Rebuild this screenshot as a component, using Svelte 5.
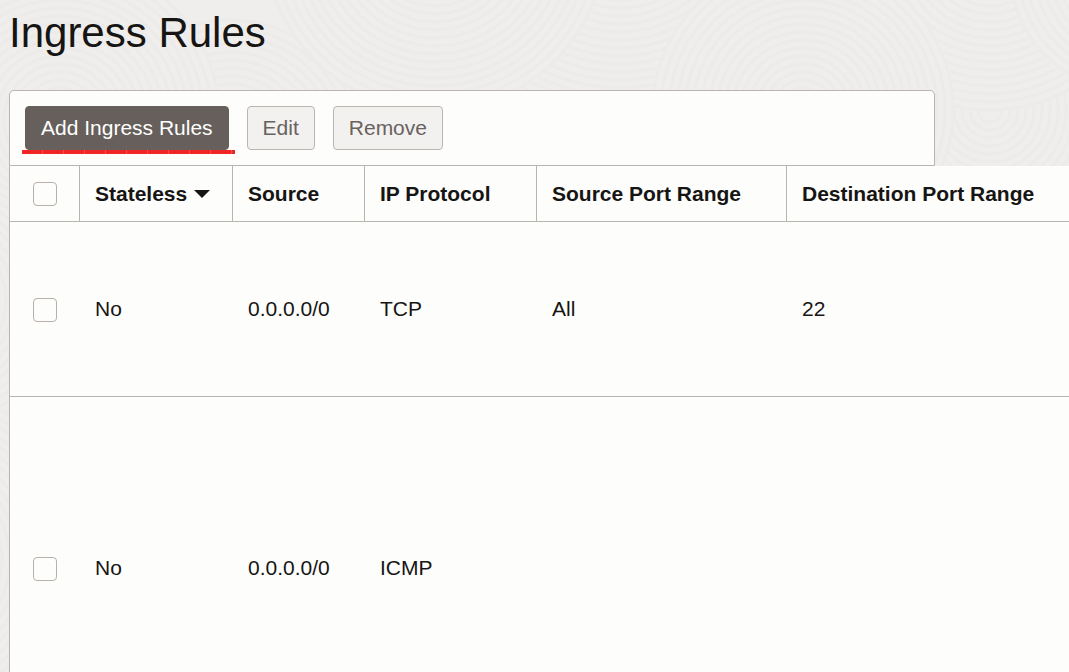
<script lang="ts">
	interface IngressRule {
		id: number;
		stateless: string;
		source: string;
		protocol: string;
		sourcePorts: string;
		destinationPorts: string;
		size: 'medium' | 'large';
	}

	const rules: IngressRule[] = [
		{
			id: 1,
			stateless: 'No',
			source: '0.0.0.0/0',
			protocol: 'TCP',
			sourcePorts: 'All',
			destinationPorts: '22',
			size: 'medium',
		},
		{
			id: 2,
			stateless: 'No',
			source: '0.0.0.0/0',
			protocol: 'ICMP',
			sourcePorts: '',
			destinationPorts: '',
			size: 'large',
		},
	];

	let selected: number[] = $state([]);
	let allSelected = $derived(selected.length === rules.length);

	function toggleAll() {
		selected = allSelected ? [] : rules.map((rule) => rule.id);
	}

	// Overlapping discs of rings, painted back to front
	const swirls = [
		{ cx: 620, cy: -90, r: 250 },
		{ cx: 230, cy: 150, r: 130 },
		{ cx: 60, cy: 120, r: 160 },
		{ cx: 990, cy: 110, r: 100 },
		{ cx: 990, cy: -50, r: 160 },
		{ cx: 1130, cy: -30, r: 120 },
		{ cx: 803, cy: 110, r: 150 },
		{ cx: 435, cy: -60, r: 170 },
		{ cx: -60, cy: 300, r: 130 },
		{ cx: -80, cy: 560, r: 170 },
	];

	function rings(radius: number) {
		const radii: number[] = [];
		for (let r = radius; r > 4; r -= 8) radii.push(r);
		return radii;
	}
</script>

<div class="page">
	<svg class="texture" aria-hidden="true">
		{#each swirls as swirl}
			{#each rings(swirl.r) as r}
				<circle cx={swirl.cx} cy={swirl.cy} {r} />
			{/each}
		{/each}
	</svg>

	<main>
		<h1>Ingress Rules</h1>

		<div class="toolbar">
			<button type="button" class="btn primary">Add Ingress Rules</button>
			<button type="button" class="btn" disabled={selected.length !== 1}>Edit</button>
			<button type="button" class="btn" disabled={selected.length === 0}>Remove</button>
		</div>

		<table>
			<colgroup>
				<col class="col-check" />
				<col class="col-stateless" />
				<col class="col-source" />
				<col class="col-protocol" />
				<col class="col-ports" />
				<col />
			</colgroup>
			<thead>
				<tr>
					<th class="check">
						<input
							type="checkbox"
							aria-label="Select all rules"
							checked={allSelected}
							onchange={toggleAll}
						/>
					</th>
					<th scope="col">
						<button type="button" class="sort">
							Stateless
							<svg width="16" height="8" viewBox="0 0 16 8" aria-hidden="true">
								<path d="M0 0h16L8 8z" />
							</svg>
						</button>
					</th>
					<th scope="col">Source</th>
					<th scope="col">IP Protocol</th>
					<th scope="col">Source Port Range</th>
					<th scope="col">Destination Port Range</th>
				</tr>
			</thead>
			<tbody>
				{#each rules as rule (rule.id)}
					<tr class={rule.size}>
						<td class="check">
							<input
								type="checkbox"
								aria-label="Select {rule.protocol} rule"
								value={rule.id}
								bind:group={selected}
							/>
						</td>
						<td>{rule.stateless}</td>
						<td>{rule.source}</td>
						<td>{rule.protocol}</td>
						<td>{rule.sourcePorts}</td>
						<td>{rule.destinationPorts}</td>
					</tr>
				{/each}
			</tbody>
		</table>
	</main>
</div>

<style>
	:global(body) {
		margin: 0;
		background: #efeeec;
	}

	.page {
		position: relative;
		height: 100vh;
		overflow: hidden;
		font-family: 'Liberation Sans', Arial, sans-serif;
		font-size: 21px;
		line-height: 24px;
		color: #161513;
	}

	.texture {
		position: absolute;
		inset: 0;
		width: 100%;
		height: 100%;
	}

	.texture circle {
		fill: #efeeec;
		stroke: #ecebe9;
		stroke-width: 3;
	}

	main {
		position: relative;
		padding-left: 9px;
	}

	h1 {
		margin: 0;
		padding: 9px 0 33px;
		font-size: 42px;
		font-weight: 400;
		line-height: 48px;
	}

	.toolbar {
		display: flex;
		gap: 18px;
		margin-right: 134px;
		padding: 15px;
		border: 1px solid #b8b4b0;
		border-radius: 5px 5px 0 0;
		background: #fdfdfb;
	}

	.btn {
		position: relative;
		height: 44px;
		padding: 0 15px;
		border: 1px solid #bbb5b0;
		border-radius: 4px;
		background: #f3f1f0;
		color: #68625e;
		font: inherit;
	}

	.primary {
		border-color: #665f5b;
		background: #665f5b;
		color: #fff;
	}

	/* red marker line under the main action */
	.primary::after {
		content: '';
		position: absolute;
		left: -4px;
		right: -7px;
		bottom: -5px;
		height: 4px;
		background: repeating-linear-gradient(to right, #f22525 0 20px, #f0504c 20px 21px);
	}

	table {
		width: 100%;
		table-layout: fixed;
		border-spacing: 0;
		border-left: 1px solid #b8b4b0;
		background: #fdfdfb;
	}

	.col-check {
		width: 69px;
	}

	.col-stateless {
		width: 153px;
	}

	.col-source {
		width: 132px;
	}

	.col-protocol {
		width: 172px;
	}

	.col-ports {
		width: 250px;
	}

	th,
	td {
		padding: 0 15px;
		border-bottom: 1px solid #b8b4b0;
		text-align: left;
		vertical-align: middle;
		white-space: nowrap;
	}

	th {
		height: 55px;
		border-left: 1px solid #b8b4b0;
		font-weight: 700;
	}

	/* body cells have no divider, so one more pixel lines them up */
	td {
		padding-left: 16px;
	}

	th.check {
		border-left: 0;
	}

	.check {
		padding: 0 23px;
	}

	td.check {
		padding-top: 2px;
	}

	.medium td {
		height: 174px;
	}

	.medium td.check {
		height: 172px;
	}

	.large td {
		height: 342px;
	}

	.large td.check {
		height: 340px;
	}

	input {
		display: block;
		appearance: none;
		box-sizing: border-box;
		width: 24px;
		height: 24px;
		margin: 0;
		border: 1px solid #b8b0aa;
		border-radius: 4px;
		background: #fdfdfb;
	}

	input:checked {
		background: #665f5b;
	}

	.sort {
		display: flex;
		align-items: center;
		gap: 7px;
		padding: 0;
		border: 0;
		background: none;
		color: inherit;
		font: inherit;
	}

	.sort path {
		fill: #161513;
	}
</style>
